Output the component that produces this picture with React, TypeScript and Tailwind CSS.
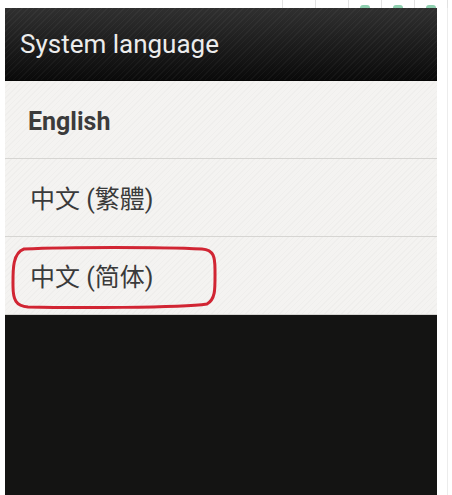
const font = { fontFamily: "Roboto, 'Noto Sans CJK TC', 'Noto Sans CJK SC', sans-serif" };

const stripe =
  "bg-[repeating-linear-gradient(135deg,rgba(255,255,255,0.035)_0px,rgba(255,255,255,0.035)_1px,transparent_1px,transparent_4px)]";
const lightStripe =
  "bg-[repeating-linear-gradient(135deg,rgba(0,0,0,0.018)_0px,rgba(0,0,0,0.018)_1px,transparent_1px,transparent_4px)]";

function LangRow({ label, bold }: { label: string; bold?: boolean }) {
  return (
    <div className={`h-[78px] bg-[#f4f3f1] border-b border-[#d6d5d2] flex items-center pt-[4px] ${lightStripe}`}>
      <span
        className={`text-[25px] ${bold ? "font-bold pl-[23px] text-[#3b3b3b]" : "pl-[25px] text-[#3a3a3a]"}`}
        style={font}
      >
        {label}
      </span>
    </div>
  );
}

export default function App() {
  const cells = [false, false, true, true, true];
  return (
    <div className="w-[452px] h-[495px] bg-white flex flex-col overflow-hidden relative">
      {/* strip of toolbar cells above the screen */}
      <div className="h-[8px] flex pl-[282px]">
        {cells.map((g, i) => (
          <div key={i} className="w-[33px] border-l border-[#e2e2e2] flex items-end justify-center">
            {g && <div className="w-[10px] h-[3px] bg-[#8fd0b0] rounded-t-sm" />}
          </div>
        ))}
        <div className="border-l border-[#e2e2e2]" />
      </div>

      <div className="flex flex-1">
        <div className="w-[432px] ml-[5px] flex flex-col relative">
          <div className="h-[73px] bg-[linear-gradient(180deg,#303030,#0a0a0a)] border-b border-[#050505] flex items-center">
            <div className={`w-full h-full flex items-center ${stripe}`}>
              <span className="pl-[15px] text-[26px] text-[#ececec]" style={font}>
                System language
              </span>
            </div>
          </div>
          <LangRow label="English" bold />
          <LangRow label="中文 (繁體)" />
          <LangRow label="中文 (简体)" />
          <div className="flex-1 bg-[#141413]" />

          {/* red annotation */}
          <svg className="absolute left-[5px] top-[238px]" width="208" height="64" viewBox="0 0 208 64">
            <path
              d="M14 3 C60 1 150 1 192 3 C204 4 205 11 205 24 C205 42 206 53 197 58 C170 62 60 62 18 61 C6 60 3 54 3 40 C3 26 2 7 14 3 Z"
              fill="none"
              stroke="#d12533"
              strokeWidth="3"
            />
          </svg>
        </div>
        <div className="w-[10px]" />
        <div className="w-px bg-[#ececec]" />
      </div>
    </div>
  );
}
